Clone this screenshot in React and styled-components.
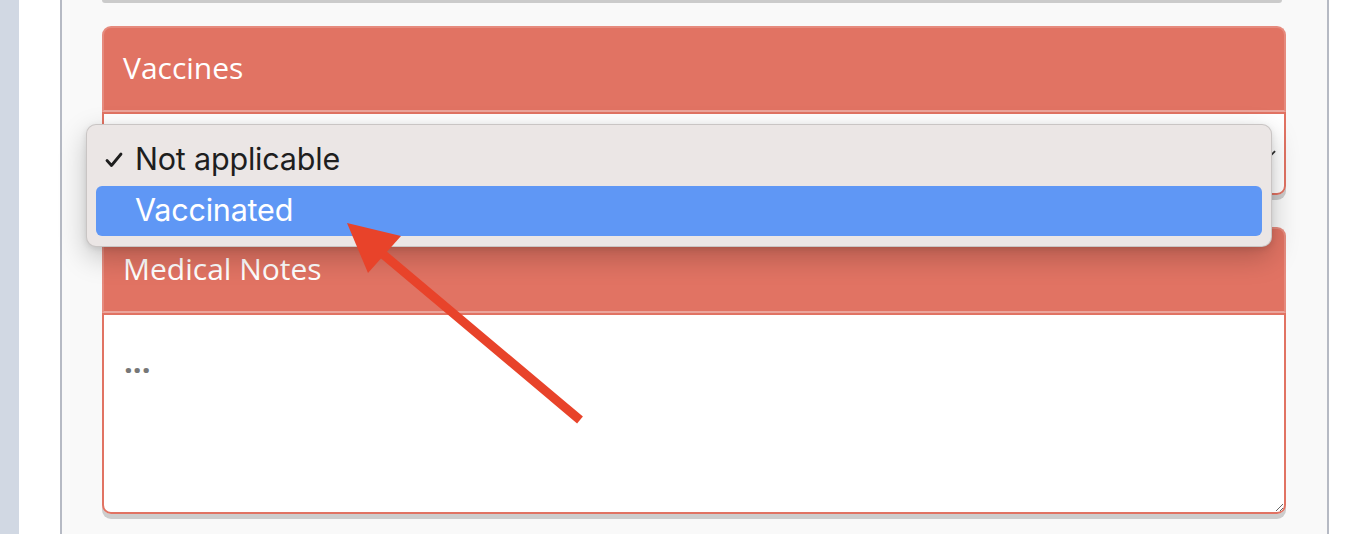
import React from 'react';
import styled, { createGlobalStyle } from 'styled-components';

const GlobalStyle = createGlobalStyle`
  html, body {
    margin: 0;
    padding: 0;
    background: #ffffff;
  }
  body {
    font-family: 'Open Sans', 'Noto Sans', sans-serif;
  }
`;

const App = () => {
  return (
    <>
      <GlobalStyle />
      <Page>
        <Sidebar />
        <Gutter />
        <Panel>
          <PrevCardEdge />
          <Card>
            <CardHeader>Vaccines</CardHeader>
            <SelectBox>
              <SelectValue>Not applicable</SelectValue>
              <Chevron viewBox="0 0 14 8">
                <path d="M1 1 L7 7 L13 1" />
              </Chevron>
            </SelectBox>
          </Card>
          <Card>
            <CardHeader>Medical Notes</CardHeader>
            <NotesArea placeholder="..." />
          </Card>
        </Panel>

        {/* native select popup, shown open */}
        <Menu>
          {options.map((opt) => (
            <MenuItem key={opt.label} $active={opt.active}>
              <Check>
                {opt.checked && (
                  <svg viewBox="0 0 18 16">
                    <path d="M2 8.5 L6.5 13.5 L16 2" />
                  </svg>
                )}
              </Check>
              {opt.label}
            </MenuItem>
          ))}
        </Menu>

        <ArrowLayer viewBox="0 0 1362 534">
          <line x1="580" y1="420" x2="378" y2="250" />
          <polygon points="347,223 401,236 368,273" />
        </ArrowLayer>
      </Page>
    </>
  );
};

const options = [
  { label: 'Not applicable', checked: true, active: false },
  { label: 'Vaccinated', checked: false, active: true },
];

const Page = styled.div`
  position: relative;
  display: flex;
  width: 1362px;
  height: 534px;
  overflow: hidden;
  background: #ffffff;
`;

const Sidebar = styled.div`
  width: 19px;
  flex-shrink: 0;
  background: #d1d8e3;
`;

const Gutter = styled.div`
  width: 41px;
  flex-shrink: 0;
  background: #ffffff;
`;

const Panel = styled.div`
  width: 1269px;
  flex-shrink: 0;
  display: flex;
  flex-direction: column;
  gap: 32px;
  padding: 0 41px 0 40px;
  box-sizing: border-box;
  background: #f9f9f9;
  border-left: 2px solid #b6bac4;
  border-right: 2px solid #b6bac4;
`;

const PrevCardEdge = styled.div`
  height: 3px;
  margin-bottom: -9px;
  margin-right: 4px;
  background: #cbcbcb;
  border-radius: 0 0 6px 6px;
`;

const Card = styled.section`
  display: flex;
  flex-direction: column;
  border-radius: 9px;
  box-shadow: 0 5px 0 #cdcdcd;
`;

const CardHeader = styled.header`
  height: 86px;
  display: flex;
  align-items: center;
  padding: 0 19px 3px;
  background: #e17363;
  border: 2px solid #e68b7e;
  border-bottom-color: #eba59c;
  border-radius: 9px 9px 0 0;
  color: #ffffff;
  font-family: 'Open Sans', sans-serif;
  font-size: 30px;
  box-sizing: border-box;
`;

const SelectBox = styled.div`
  height: 83px;
  display: flex;
  align-items: center;
  justify-content: space-between;
  padding: 0 8px 0 21px;
  background: #ffffff;
  border: 2px solid #e17363;
  border-radius: 0 0 9px 9px;
  box-sizing: border-box;
`;

const SelectValue = styled.span`
  font-family: 'Open Sans', sans-serif;
  font-size: 26px;
  color: #333333;
`;

const Chevron = styled.svg`
  width: 13px;
  height: 8px;
  fill: none;
  stroke: #333333;
  stroke-width: 2;
`;

const NotesArea = styled.textarea`
  display: block;
  height: 201px;
  padding: 26px 20px;
  background: #ffffff;
  border: 2px solid #e17363;
  border-radius: 0 0 9px 9px;
  box-sizing: border-box;
  font-family: 'Open Sans', sans-serif;
  font-size: 31px;
  line-height: 40px;
  color: #333333;
  resize: vertical;
  outline: none;

  &::placeholder {
    color: #777777;
    font-weight: 700;
  }
`;

const Menu = styled.div`
  position: absolute;
  left: 86px;
  top: 124px;
  width: 1186px;
  height: 123px;
  padding: 10px 9px;
  box-sizing: border-box;
  display: flex;
  flex-direction: column;
  gap: 1px;
  background: #ebe6e5;
  border: 1px solid rgba(0, 0, 0, 0.14);
  border-radius: 10px;
  box-shadow: 0 10px 28px rgba(0, 0, 0, 0.22), 0 2px 6px rgba(0, 0, 0, 0.1);
`;

const MenuItem = styled.div`
  height: 51px;
  display: flex;
  align-items: center;
  padding: 0 0 3px 9px;
  box-sizing: border-box;
  border-radius: 6px;
  background: ${(p) => (p.$active ? '#5f97f5' : 'transparent')};
  color: ${(p) => (p.$active ? '#ffffff' : '#1e1e1e')};
  font-family: Inter, 'Noto Sans', sans-serif;
  font-size: 30.5px;
  letter-spacing: -0.2px;
`;

const Check = styled.span`
  width: 30px;
  flex-shrink: 0;
  display: flex;
  align-items: center;
  padding-top: 3px;

  svg {
    width: 18px;
    height: 16px;
    flex-shrink: 0;
    fill: none;
    stroke: #1e1e1e;
    stroke-width: 2.8;
    stroke-linecap: round;
    stroke-linejoin: round;
  }
`;

const ArrowLayer = styled.svg`
  position: absolute;
  left: 0;
  top: 0;
  width: 1362px;
  height: 534px;
  pointer-events: none;

  line {
    stroke: #e8432a;
    stroke-width: 9;
  }
  polygon {
    fill: #e8432a;
  }
`;

export default App;
